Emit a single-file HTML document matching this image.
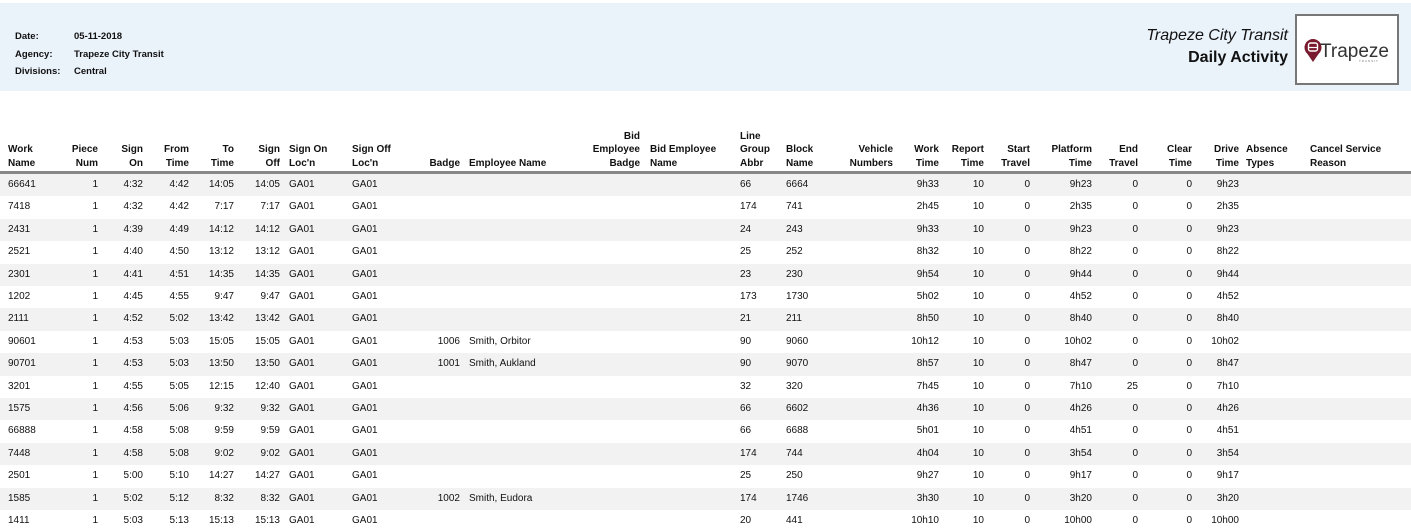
<!DOCTYPE html>
<html><head><meta charset="utf-8"><style>
body{margin:0;width:1411px;height:521px;overflow:hidden;background:#fff;font-family:"Liberation Sans",Arial,sans-serif;color:#111;position:relative}
.band{position:absolute;left:0;top:3px;width:1411px;height:88px;background:#eaf2fa}
.meta{position:absolute;font-size:9.5px;font-weight:bold;left:15px}
.meta span{position:absolute;left:59px;white-space:nowrap}
.t1{position:absolute;right:123px;top:27px;font-size:16px;font-style:italic;white-space:nowrap}
.t2{position:absolute;right:123px;top:49px;font-size:16px;font-weight:bold;white-space:nowrap}
.logo{position:absolute;left:1295px;top:14px;width:100px;height:67px;border:2px solid #777;background:#fff}
.c{position:absolute;font-size:10px;white-space:nowrap}
.h{font-weight:bold;line-height:13.5px}
.row{position:absolute;left:0;width:1411px;height:22.4px}
.row.g{background:#f2f2f2}
.line{position:absolute;left:0;top:171px;width:1411px;height:3px;background:#888}
</style></head><body>
<div class="band"></div>
<div class="meta" style="top:31px">Date:<span>05-11-2018</span></div>
<div class="meta" style="top:49px">Agency:<span>Trapeze City Transit</span></div>
<div class="meta" style="top:66px">Divisions:<span>Central</span></div>
<div class="t1">Trapeze City Transit</div>
<div class="t2">Daily Activity</div>
<div class="logo">
<svg width="100" height="67" viewBox="0 0 100 67">
<path d="M16 46 L10.5 38 A8.5 8.5 0 1 1 21.5 38 Z" fill="#7a1a2e"/>
<rect x="11.5" y="27" width="9" height="8" rx="2" fill="none" stroke="#fff" stroke-width="1.4"/>
<line x1="11.5" y1="31.5" x2="20.5" y2="31.5" stroke="#fff" stroke-width="1.2"/>
<text x="23" y="41" font-family="Liberation Sans,Arial,sans-serif" font-size="19" fill="#333" textLength="69" lengthAdjust="spacingAndGlyphs">Trapeze</text>
<text x="62" y="46" font-family="Liberation Sans,Arial,sans-serif" font-size="3" fill="#777" letter-spacing="1">TRANSIT</text>
</svg></div>
<div class="line"></div>
<div id="t"></div>
<script>
var cols=[['l',8],['r',98],['r',143],['r',189],['r',234],['r',280],['l',289],['l',352],['r',460],['l',469],['r',640],['l',650],['l',740],['l',786],['r',893],['r',939],['r',984],['r',1030],['r',1092],['r',1138],['r',1192],['r',1239],['l',1246],['l',1310]];
var hdr=[['Work','Name'],['Piece','Num'],['Sign','On'],['From','Time'],['To','Time'],['Sign','Off'],['Sign On','Loc\'n'],['Sign Off','Loc\'n'],['Badge'],['Employee Name'],['Bid','Employee','Badge'],['Bid Employee','Name'],['Line','Group','Abbr'],['Block','Name'],['Vehicle','Numbers'],['Work','Time'],['Report','Time'],['Start','Travel'],['Platform','Time'],['End','Travel'],['Clear','Time'],['Drive','Time'],['Absence','Types'],['Cancel Service','Reason']];
var d=[
['66641','4:32','4:42','14:05','14:05','','','66','6664','9h33','9h23','0','9h23'],
['7418','4:32','4:42','7:17','7:17','','','174','741','2h45','2h35','0','2h35'],
['2431','4:39','4:49','14:12','14:12','','','24','243','9h33','9h23','0','9h23'],
['2521','4:40','4:50','13:12','13:12','','','25','252','8h32','8h22','0','8h22'],
['2301','4:41','4:51','14:35','14:35','','','23','230','9h54','9h44','0','9h44'],
['1202','4:45','4:55','9:47','9:47','','','173','1730','5h02','4h52','0','4h52'],
['2111','4:52','5:02','13:42','13:42','','','21','211','8h50','8h40','0','8h40'],
['90601','4:53','5:03','15:05','15:05','1006','Smith, Orbitor','90','9060','10h12','10h02','0','10h02'],
['90701','4:53','5:03','13:50','13:50','1001','Smith, Aukland','90','9070','8h57','8h47','0','8h47'],
['3201','4:55','5:05','12:15','12:40','','','32','320','7h45','7h10','25','7h10'],
['1575','4:56','5:06','9:32','9:32','','','66','6602','4h36','4h26','0','4h26'],
['66888','4:58','5:08','9:59','9:59','','','66','6688','5h01','4h51','0','4h51'],
['7448','4:58','5:08','9:02','9:02','','','174','744','4h04','3h54','0','3h54'],
['2501','5:00','5:10','14:27','14:27','','','25','250','9h27','9h17','0','9h17'],
['1585','5:02','5:12','8:32','8:32','1002','Smith, Eudora','174','1746','3h30','3h20','0','3h20'],
['1411','5:03','5:13','15:13','15:13','','','20','441','10h10','10h00','0','10h00']];
var h='';
function cell(i,txt,top,cls){var c=cols[i];var pos=c[0]=='l'?'left:'+c[1]+'px':'right:'+(1411-c[1])+'px;text-align:right';return '<div class="c '+cls+'" style="top:'+top+'px;'+pos+'">'+txt+'</div>';}
hdr.forEach(function(a,i){var top=169-13.5*a.length+1;h+=cell(i,a.join('<br>'),top,'h');});
d.forEach(function(r,k){var y=174+k*22.4;h+='<div class="row'+(k%2==0?' g':'')+'" style="top:'+y+'px"></div>';
var v=[r[0],'1',r[1],r[2],r[3],r[4],'GA01','GA01',r[5],r[6],'','',r[7],r[8],'',r[9],'10','0',r[10],r[11],'0',r[12],'',''];
var ty=y+5;v.forEach(function(t,i){if(t!=='')h+=cell(i,t,ty,'');});});
document.getElementById('t').innerHTML=h;
</script>
</body></html>
